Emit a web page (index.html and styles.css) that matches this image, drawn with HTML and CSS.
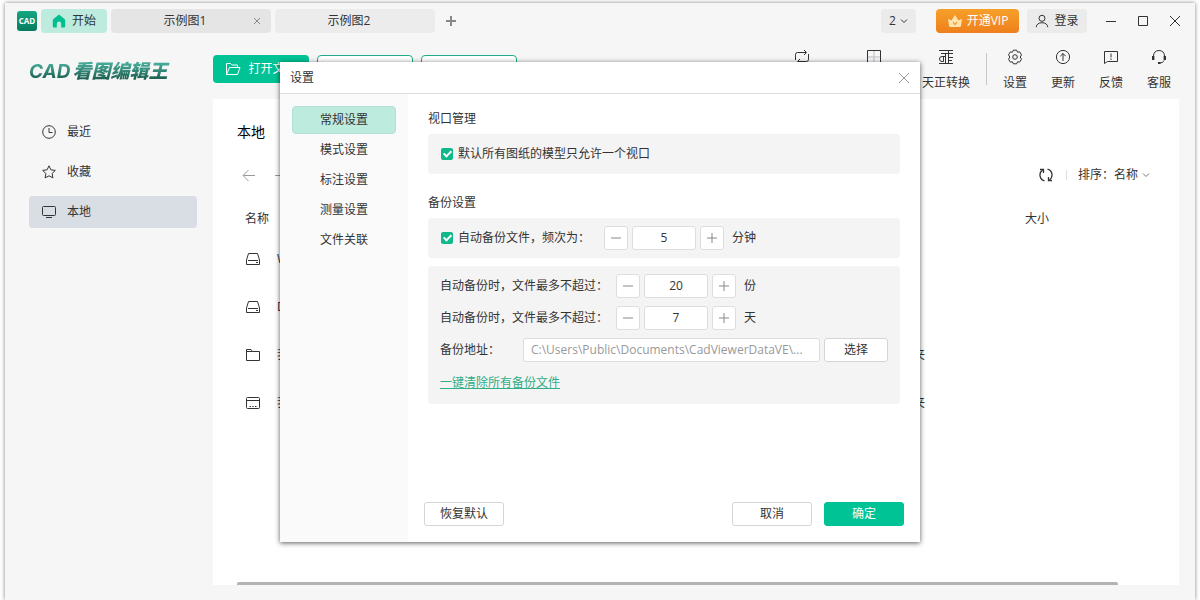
FILE: index.html
```html
<!DOCTYPE html>
<html lang="zh-CN">
<head>
    <meta charset="UTF-8">
    <meta name="viewport" content="width=device-width, initial-scale=1.0">
    <title>CAD看图编辑王</title>
    <link rel="stylesheet" href="styles.css">
</head>
<body>

<div class="app">
    <header class="titlebar">
        <span class="app-icon">CAD</span>
        <button class="tab tab-home" type="button">
            <svg width="14" height="14" viewBox="0 0 14 14"><path d="M7 .5 1.2 5.2Q.8 5.6.8 6.200V12.200Q.8 13.500 2 13.500H4.800V9.800A2.200 2.200 0 0 1 9.200 9.800V13.500H12Q13.200 13.500 13.200 12.200V6.200Q13.200 5.600 12.800 5.200Z" fill="#00bf8f"/></svg>
            开始
        </button>
        <div class="tab tab-file active">
            <button class="tab-name" type="button">示例图1</button>
            <button class="tab-close" type="button" aria-label="关闭标签">
                <svg width="8" height="8" viewBox="0 0 8 8"><path d="M1 1 7 7M7 1 1 7"/></svg>
            </button>
        </div>
        <div class="tab tab-file">
            <button class="tab-name" type="button">示例图2</button>
        </div>
        <button class="tab-add" type="button" aria-label="新建标签">
            <svg width="10" height="10" viewBox="0 0 10 10"><path d="M5 0V10M0 5H10"/></svg>
        </button>

        <div class="window-tools">
            <button class="count" type="button">2
                <svg width="8" height="6" viewBox="0 0 8 6"><path d="M1 1.500 4 4.500 7 1.500"/></svg>
            </button>
            <button class="vip" type="button">
                <svg width="16" height="14" viewBox="0 0 16 14"><path d="M2 11.500 1 4.800 4.500 6.500 8 1 11.500 6.500 15 4.800 14 11.500Q13.800 13 12.500 13H3.500Q2.200 13 2 11.500Z" fill="#ffe3b0"/><path d="M6 8 8 10.500 10 8" fill="none" stroke="#f09325" stroke-width="1.200"/></svg>
                开通VIP
            </button>
            <button class="login" type="button">
                <svg width="14" height="14" viewBox="0 0 14 14"><circle cx="7" cy="4.300" r="3"/><path d="M1.200 13.200C1.400 10.400 3.600 8.700 7 8.700S12.600 10.400 12.800 13.200"/></svg>
                登录
            </button>
            <div class="window-buttons">
                <button type="button" aria-label="最小化"><svg width="12" height="12" viewBox="0 0 12 12"><path d="M1 6.500H11"/></svg></button>
                <button type="button" aria-label="最大化"><svg width="12" height="12" viewBox="0 0 12 12"><path d="M1.500 1.500H10.500V10.500H1.500Z"/></svg></button>
                <button type="button" aria-label="关闭"><svg width="12" height="12" viewBox="0 0 12 12"><path d="M1 1 11 11M11 1 1 11"/></svg></button>
            </div>
        </div>
    </header>

    <div class="body">
        <aside class="sidebar">
            <h1 class="brand"><span>CAD</span>看图编辑王</h1>
            <nav class="menu">
                <a href="#recent">
                    <svg width="14" height="14" viewBox="0 0 14 14"><circle cx="7" cy="7" r="6.300"/><path d="M7 3V7.500H10.500"/></svg>
                    最近
                </a>
                <a href="#favorite">
                    <svg width="14" height="14" viewBox="0 0 14 14"><path d="M7 .8 8.900 4.800 13.300 5.400 10.100 8.500 10.900 12.900 7 10.800 3.100 12.900 3.900 8.500 .7 5.400 5.100 4.800Z"/></svg>
                    收藏
                </a>
                <a href="#local" class="current">
                    <svg width="14" height="14" viewBox="0 0 14 14"><rect x=".5" y="1.500" width="13" height="9" rx="1"/><path d="M4 12.500H10"/></svg>
                    本地
                </a>
            </nav>
        </aside>

        <main class="main">
            <div class="toolbar">
                <button class="btn-open" type="button">
                    <svg width="16" height="14" viewBox="0 0 16 14"><path d="M3 12.500H12.500L15 5.500H4.500L1.500 12.500V1.500H5.500L7 3H12.500V5.500M1.500 12.500H4"/></svg>
                    打开文件
                </button>
                <button class="btn-line" type="button">新建文件</button>
                <button class="btn-line" type="button">新建文件夹</button>

                <div class="tools">
                    <button type="button">
                        <svg width="16" height="16" viewBox="0 0 16 16"><path d="M1.500 11V5.500Q1.500 3.500 3.500 3.500H12M10 1 12.500 3.500 10 6M14.500 5V10.500Q14.500 12.500 12.500 12.500H4M6 10 3.500 12.500 6 15"/></svg>
                        格式转换
                    </button>
                    <button type="button">
                        <svg width="16" height="16" viewBox="0 0 16 16"><path d="M1.500 1.500H14.500V14.500H1.500Z"/><path d="M8 2V14M2 8H14" stroke="#b9bcc4"/></svg>
                        批量打印
                    </button>
                    <button type="button">
                        <svg width="16" height="16" viewBox="0 0 16 16"><path d="M1 1.500H15M3 4.500H15M10.500 1.500V14.500M7.500 4.500V14.500M7.500 7.500H4Q1.500 7.500 1.500 10T4 12.500H5.500V7.500M10.500 8.500H15M1 14.500H15M10.500 11.500H14"/></svg>
                        天正转换
                    </button>
                    <span class="divider"></span>
                    <button type="button">
                        <svg width="16" height="16" viewBox="0 0 16 16"><path d="M6.300 1.200H9.700L10.500 3.200 12.700 2.900 14.500 5.800 13.200 8 14.500 10.200 12.700 13.100 10.500 12.800 9.700 14.800H6.300L5.500 12.800 3.300 13.100 1.500 10.200 2.800 8 1.500 5.800 3.300 2.900 5.500 3.200Z" stroke-linejoin="round"/><circle cx="8" cy="8" r="2.300"/></svg>
                        设置
                    </button>
                    <button type="button">
                        <svg width="16" height="16" viewBox="0 0 16 16"><circle cx="8" cy="8" r="6.600"/><path d="M8 12V4.500M5.300 7.200 8 4.500 10.700 7.200"/></svg>
                        更新
                    </button>
                    <button type="button">
                        <svg width="16" height="16" viewBox="0 0 16 16"><path d="M1.500 2.500H14.500V12.500H4.500L1.500 14.500ZM8 4.500V8.500M8 9.500V11"/></svg>
                        反馈
                    </button>
                    <button type="button">
                        <svg width="16" height="16" viewBox="0 0 16 16"><path d="M2.500 7C2.500 3.500 4.800 1.500 8 1.500S13.500 3.500 13.500 7M13 11.500Q12 14 9 14"/><path d="M2.200 7V11M13.800 7V11" stroke-width="2.400"/><path d="M7 14H9.500" stroke-width="2"/></svg>
                        客服
                    </button>
                </div>
            </div>

            <section class="panel">
                <h2>本地</h2>
                <div class="path-row">
                    <button type="button" aria-label="后退"><svg width="14" height="14" viewBox="0 0 14 14"><path d="M13 7.500H1.500M6.500 2 1 7.500 6.500 13"/></svg></button>
                    <button type="button" aria-label="前进"><svg width="14" height="14" viewBox="0 0 14 14"><path d="M1 7.500H12.500M7.500 2 13 7.500 7.500 13"/></svg></button>
                    <div class="sort">
                        <button class="refresh" type="button" aria-label="刷新">
                            <svg width="14" height="14" viewBox="0 0 14 14"><path d="M5.500 12.800A6 6 0 0 1 3.500 2.100M8.500 1.200A6 6 0 0 1 10.500 11.900" stroke-width="1.300"/><path d="M1 1.500H4.500V5M13 12.500H9.500V9" stroke-width="1.300"/></svg>
                        </button>
                        <label for="sort">排序：</label>
                        <select id="sort">
                            <option>名称</option>
                        </select>
                        <svg class="arrow" width="8" height="6" viewBox="0 0 8 6"><path d="M1 1.500 4 4.500 7 1.500"/></svg>
                    </div>
                </div>
                <table class="files">
                    <thead>
                        <tr><th>名称</th><th class="col-type">类型</th><th class="col-size">大小</th></tr>
                    </thead>
                    <tbody>
                        <tr>
                            <td><div class="file"><svg width="16" height="14" viewBox="0 0 16 14"><path d="M1.500 12.500V8L3.500 1.500H12.500L14.500 8V12.500ZM3 8.500H13M11 10.500H13"/></svg>Windows (C:)</div></td>
                            <td>磁盘</td><td></td>
                        </tr>
                        <tr>
                            <td><div class="file"><svg width="16" height="14" viewBox="0 0 16 14"><path d="M1.500 12.500V8L3.500 1.500H12.500L14.500 8V12.500ZM3 8.500H13M11 10.500H13"/></svg>Data (D:)</div></td>
                            <td>磁盘</td><td></td>
                        </tr>
                        <tr>
                            <td><div class="file"><svg width="16" height="14" viewBox="0 0 16 14"><path d="M1.500 12.500V1.500H6L7.500 3.500H14.500V12.500ZM1.500 3.500H7.500"/></svg>我的文档</div></td>
                            <td>文件夹</td><td></td>
                        </tr>
                        <tr>
                            <td><div class="file"><svg width="16" height="14" viewBox="0 0 16 14"><rect x="1.500" y="1.500" width="13" height="11" rx="1"/><path d="M1.500 4.500H14.500M4.500 10.500H6M7.300 10.500H8.700M10 10.500H11.500"/></svg>我的桌面</div></td>
                            <td>文件夹</td><td></td>
                        </tr>
                    </tbody>
                </table>
                <div class="scrollbar"></div>
            </section>
        </main>
    </div>

    <div class="overlay">
        <form class="dialog" role="dialog" aria-labelledby="dialog-title">
            <div class="dialog-head">
                <h2 id="dialog-title">设置</h2>
                <button type="button" aria-label="关闭设置"><svg width="12" height="12" viewBox="0 0 12 12"><path d="M1 1 11 11M11 1 1 11"/></svg></button>
            </div>
            <div class="dialog-body">
                <nav class="dialog-nav">
                    <a href="#general" class="current">常规设置</a>
                    <a href="#mode">模式设置</a>
                    <a href="#dimension">标注设置</a>
                    <a href="#measure">测量设置</a>
                    <a href="#assoc">文件关联</a>
                </nav>
                <div class="settings">
                    <h3>视口管理</h3>
                    <div class="group">
                        <div class="row">
                            <label class="check"><input type="checkbox" checked>默认所有图纸的模型只允许一个视口</label>
                        </div>
                    </div>

                    <h3>备份设置</h3>
                    <div class="group">
                        <div class="row">
                            <label class="check check-freq"><input type="checkbox" checked>自动备份文件，频次为：</label>
                            <div class="stepper">
                                <button type="button" aria-label="减少"><svg width="12" height="12" viewBox="0 0 12 12"><path d="M1 6H11"/></svg></button>
                                <input type="text" value="5" aria-label="备份频次">
                                <button type="button" aria-label="增加"><svg width="12" height="12" viewBox="0 0 12 12"><path d="M1 6H11M6 1V11"/></svg></button>
                            </div>
                            <span>分钟</span>
                        </div>
                    </div>
                    <div class="group">
                        <div class="row">
                            <label class="limit" for="max-count">自动备份时，文件最多不超过：</label>
                            <div class="stepper">
                                <button type="button" aria-label="减少"><svg width="12" height="12" viewBox="0 0 12 12"><path d="M1 6H11"/></svg></button>
                                <input type="text" id="max-count" value="20">
                                <button type="button" aria-label="增加"><svg width="12" height="12" viewBox="0 0 12 12"><path d="M1 6H11M6 1V11"/></svg></button>
                            </div>
                            <span>份</span>
                        </div>
                        <div class="row">
                            <label class="limit" for="max-days">自动备份时，文件最多不超过：</label>
                            <div class="stepper">
                                <button type="button" aria-label="减少"><svg width="12" height="12" viewBox="0 0 12 12"><path d="M1 6H11"/></svg></button>
                                <input type="text" id="max-days" value="7">
                                <button type="button" aria-label="增加"><svg width="12" height="12" viewBox="0 0 12 12"><path d="M1 6H11M6 1V11"/></svg></button>
                            </div>
                            <span>天</span>
                        </div>
                        <div class="row">
                            <label class="address" for="backup-path">备份地址：</label>
                            <input class="path" type="text" id="backup-path" value="C:\Users\Public\Documents\CadViewerDataVE\..." readonly>
                            <button class="btn btn-choose" type="button">选择</button>
                        </div>
                        <a class="clear" href="#clear">一键清除所有备份文件</a>
                    </div>

                    <div class="dialog-foot">
                        <button class="btn" type="reset">恢复默认</button>
                        <button class="btn btn-cancel" type="button">取消</button>
                        <button class="btn btn-ok" type="submit">确定</button>
                    </div>
                </div>
            </div>
        </form>
    </div>
</div>

</body>
</html>
```
FILE: styles.css
```css
* {
    box-sizing: border-box;
}

body {
    margin: 0;
    background: #fff;
    color: #333;
    font-family: "Open Sans", "Noto Sans CJK SC", sans-serif;
    font-size: 12px;
    line-height: 24px;
}

button, input, select {
    font: inherit;
    color: inherit;
}

button {
    display: flex;
    align-items: center;
    justify-content: center;
    padding: 0;
    border: none;
    background: none;
    white-space: nowrap;
}

svg {
    flex: none;
    fill: none;
    stroke: currentColor;
}

.tab-home svg, .vip svg {
    stroke: none;
}

a {
    color: inherit;
    text-decoration: none;
}

h1, h2, h3 {
    margin: 0;
    font-weight: normal;
}

.app {
    position: relative;
    display: flex;
    flex-direction: column;
    height: calc(100vh - 3px);
    margin: 3px 5px 0;
    background: #f6f6f6;
    box-shadow: 0 0 4px rgba(0, 0, 0, 0.5);
}

/* title bar */
.titlebar {
    display: flex;
    align-items: center;
    height: 36px;
    padding: 0 4px 0 12px;
    gap: 4px;
}

.app-icon {
    width: 20px;
    height: 20px;
    border-radius: 3px;
    background: linear-gradient(#15a882, #067b5e);
    color: #fff;
    font-size: 8px;
    font-weight: bold;
    line-height: 20px;
    text-align: center;
}

.tab {
    height: 24px;
    border-radius: 4px;
    background: #ececec;
}

.tab-home {
    width: 66px;
    gap: 6px;
    background: #bdebde;
}

.tab-file {
    position: relative;
    width: 160px;
}

.tab-file.active {
    background: #e5e5e5;
}

.tab-name {
    width: 100%;
    height: 24px;
    padding-right: 12px;
}

.tab-close {
    position: absolute;
    top: 0;
    right: 8px;
    width: 12px;
    height: 24px;
    color: #888;
}

.tab-add {
    width: 24px;
    height: 24px;
    color: #888;
}

.tab-add svg {
    stroke-width: 2;
}

.window-tools {
    display: flex;
    margin-left: auto;
}

.count, .login {
    height: 24px;
    border-radius: 4px;
    background: #ebebeb;
}

.count {
    width: 35px;
    gap: 4px;
    margin-right: 20px;
}

.vip {
    width: 83px;
    height: 24px;
    gap: 4px;
    margin-right: 8px;
    border-radius: 4px;
    background: linear-gradient(#f6a02a, #ef7f1c);
    color: #fff;
}

.login {
    width: 60px;
    gap: 5px;
}

.window-buttons {
    display: flex;
    margin-left: 8px;
}

.window-buttons button {
    width: 32px;
    height: 24px;
}

/* layout */
.body {
    display: flex;
    flex: 1;
    min-height: 0;
}

.sidebar {
    width: 208px;
    padding: 20px 16px 0 24px;
}

.brand {
    width: 144px;
    margin-bottom: 32px;
    background: linear-gradient(#45a896 20%, #1d5f50 80%);
    -webkit-background-clip: text;
    background-clip: text;
    color: transparent;
    font-size: 19px;
    font-weight: 900;
    font-style: italic;
    white-space: nowrap;
}

.brand span {
    margin-right: 2px;
    font-family: Inter, sans-serif;
    font-weight: bold;
}

.menu {
    display: flex;
    flex-direction: column;
    gap: 8px;
}

.menu a {
    display: flex;
    align-items: center;
    height: 32px;
    padding-left: 13px;
    gap: 11px;
    border-radius: 4px;
}

.menu .current {
    background: #d9dde4;
}

.main {
    display: flex;
    flex: 1;
    flex-direction: column;
    min-width: 0;
    padding: 0 16px 15px 0;
}

.toolbar {
    display: flex;
    height: 60px;
    gap: 8px;
}

.btn-open, .btn-line {
    width: 96px;
    height: 28px;
    margin-top: 16px;
    border-radius: 4px;
}

.btn-open {
    gap: 7px;
    background: #00c395;
    color: #fff;
}

.btn-line {
    border: 1px solid #1fae87;
    background: #fff;
    color: #1fae87;
}

.tools {
    display: flex;
    align-items: flex-start;
    gap: 24px;
    margin: 10px 8px 0 auto;
}

.tools button {
    flex-direction: column;
    line-height: 18px;
    gap: 9px;
}

.divider {
    width: 1px;
    height: 32px;
    margin: 4px -8px 0;
    background: #c8c8c8;
}

/* file list */
.panel {
    display: flex;
    flex: 1;
    flex-direction: column;
    min-height: 0;
    padding: 20px 24px 0;
    background: #fff;
}

.panel h2 {
    color: #000;
    font-size: 14px;
    line-height: 26px;
}

.path-row {
    display: flex;
    align-items: center;
    height: 24px;
    margin: 18px 0 14px;
    padding-left: 5px;
    gap: 18px;
    color: #999;
}

.sort {
    display: flex;
    align-items: center;
    margin: 0 5px 0 auto;
    color: #333;
}

.refresh {
    margin-right: 13px;
}

.sort label {
    padding-left: 12px;
    background: linear-gradient(#ddd, #ddd) left center / 1px 10px no-repeat;
}

.sort select {
    width: 28px;
    padding: 0;
    border: none;
    background: none;
    appearance: none;
}

.arrow {
    color: #777;
}

.files {
    width: 100%;
    table-layout: fixed;
    border-collapse: collapse;
}

.files th, .files td {
    padding: 0;
    font-weight: normal;
    text-align: left;
}

.files th {
    height: 34px;
    padding-top: 2px;
}

.files td {
    height: 48px;
}

.files th:first-child, .files td:first-child {
    padding-left: 8px;
}

.col-type {
    width: 136px;
}

.col-size {
    width: 130px;
}

.file {
    display: flex;
    align-items: center;
    gap: 16px;
}

.scrollbar {
    width: 96%;
    height: 3px;
    margin-top: auto;
    border-radius: 2px 2px 0 0;
    background: #b3b3b5;
}

/* settings dialog */
.overlay {
    position: absolute;
    inset: 0;
    display: flex;
    align-items: center;
    justify-content: center;
    padding-top: 1px;
}

.dialog {
    display: flex;
    flex-direction: column;
    width: 640px;
    min-height: 480px;
    background: #fff;
    box-shadow: 0 1px 5px rgba(0, 0, 0, 0.65);
}

.dialog-head {
    display: flex;
    align-items: center;
    justify-content: space-between;
    height: 32px;
    padding: 0 10px;
    border-bottom: 1px solid #ddd;
}

.dialog-head h2 {
    font-size: 12px;
}

.dialog-head button {
    color: #999;
}

.dialog-body {
    display: flex;
    flex: 1;
}

.dialog-nav {
    display: flex;
    flex-direction: column;
    width: 128px;
    padding: 12px;
    gap: 2px;
    background: #fafafa;
}

.dialog-nav a {
    height: 28px;
    border: 1px solid transparent;
    border-radius: 4px;
    line-height: 26px;
    text-align: center;
}

.dialog-nav .current {
    border-color: #b2e2d4;
    background: #bdebde;
}

.settings {
    display: flex;
    flex: 1;
    flex-direction: column;
    padding: 12px 20px 16px;
}

.settings h3 {
    margin-bottom: 2px;
    font-size: 12px;
    line-height: 26px;
}

.group {
    display: flex;
    flex-direction: column;
    gap: 8px;
    margin-bottom: 8px;
    padding: 8px 12px;
    border-radius: 4px;
    background: #f4f4f4;
}

.group + h3 {
    margin-top: 8px;
}

.row {
    display: flex;
    align-items: center;
    height: 24px;
}

.check {
    display: flex;
    align-items: center;
    gap: 5px;
    line-height: 26px;
}

.check input {
    display: flex;
    justify-content: center;
    width: 12px;
    height: 12px;
    margin: 0 0 0 1px;
    border-radius: 2px;
    background: #fff;
    appearance: none;
}

.check input:checked {
    background: #10b98a;
}

.check input:checked::after {
    content: "";
    width: 3px;
    height: 6px;
    margin-top: 1px;
    border: solid #fff;
    border-width: 0 2px 2px 0;
    transform: rotate(45deg);
}

.check-freq {
    width: 164px;
}

.limit {
    width: 176px;
}

.address {
    width: 83px;
}

.stepper {
    display: flex;
    gap: 4px;
    margin-right: 8px;
}

.stepper button, .stepper input, .path {
    height: 24px;
    border: 1px solid #dcdde2;
    border-radius: 3px;
    background: #fff;
}

.stepper button {
    width: 24px;
    color: #888;
}

.stepper input {
    width: 64px;
    padding: 0;
    text-align: center;
}

.path {
    flex: 1;
    min-width: 0;
    margin-right: 4px;
    padding: 0 7px;
    color: #999;
}

.btn {
    width: 80px;
    height: 24px;
    border: 1px solid #d5d5d5;
    border-radius: 3px;
    background: #fff;
}

.btn-choose {
    width: 64px;
}

.clear {
    align-self: flex-start;
    color: #2fae88;
    line-height: 26px;
    text-decoration: underline;
}

.dialog-foot {
    display: flex;
    gap: 12px;
    margin: auto -4px 0;
}

.btn-cancel {
    margin-left: auto;
}

.btn-ok {
    border-color: #00c395;
    background: #00c395;
    color: #fff;
}
```
